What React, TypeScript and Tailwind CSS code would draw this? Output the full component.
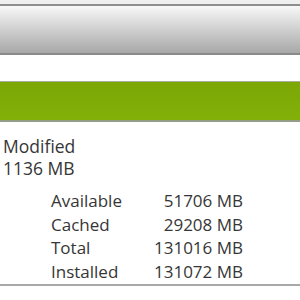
export default function App() {
  return (
    <div className="w-[300px] h-[300px] bg-white overflow-hidden flex flex-col text-[#363636]" style={{ fontFamily: '"Open Sans", "Noto Sans", sans-serif' }}>
      <div className="h-[4px] bg-[#efefef]" />
      <div className="h-[2px] bg-[#8e8e8e]" />
      <div className="h-[47px] bg-gradient-to-b from-[#f8f8f8] to-[#a8a8a8]" />
      <div className="h-[2px] bg-[#8a8a8a]" />
      <div className="h-[26px] bg-white" />
      <div className="h-[1px] bg-[#a9ad9a]" />
      <div className="h-[38px] bg-gradient-to-b from-[#7ca706] to-[#82b008]" />
      <div className="h-[2px] bg-[#939c86]" />
      <div className="pl-[3px] pt-[13px] text-[17.5px] leading-[22px] font-medium">
        <div>Modified</div>
        <div>1136 MB</div>
      </div>
      <div className="pl-[51px] pt-[11px] text-[17px] leading-[22px] font-medium grid grid-cols-[92px_100px] h-[105px]">
        <div>Available</div><div className="text-right">51706 MB</div>
        <div>Cached</div><div className="text-right">29208 MB</div>
        <div>Total</div><div className="text-right">131016 MB</div>
        <div>Installed</div><div className="text-right">131072 MB</div>
      </div>
      <div className="h-[2px] bg-[#a8a8a8]" />
      <div className="flex-1 bg-white" />
    </div>
  );
}
